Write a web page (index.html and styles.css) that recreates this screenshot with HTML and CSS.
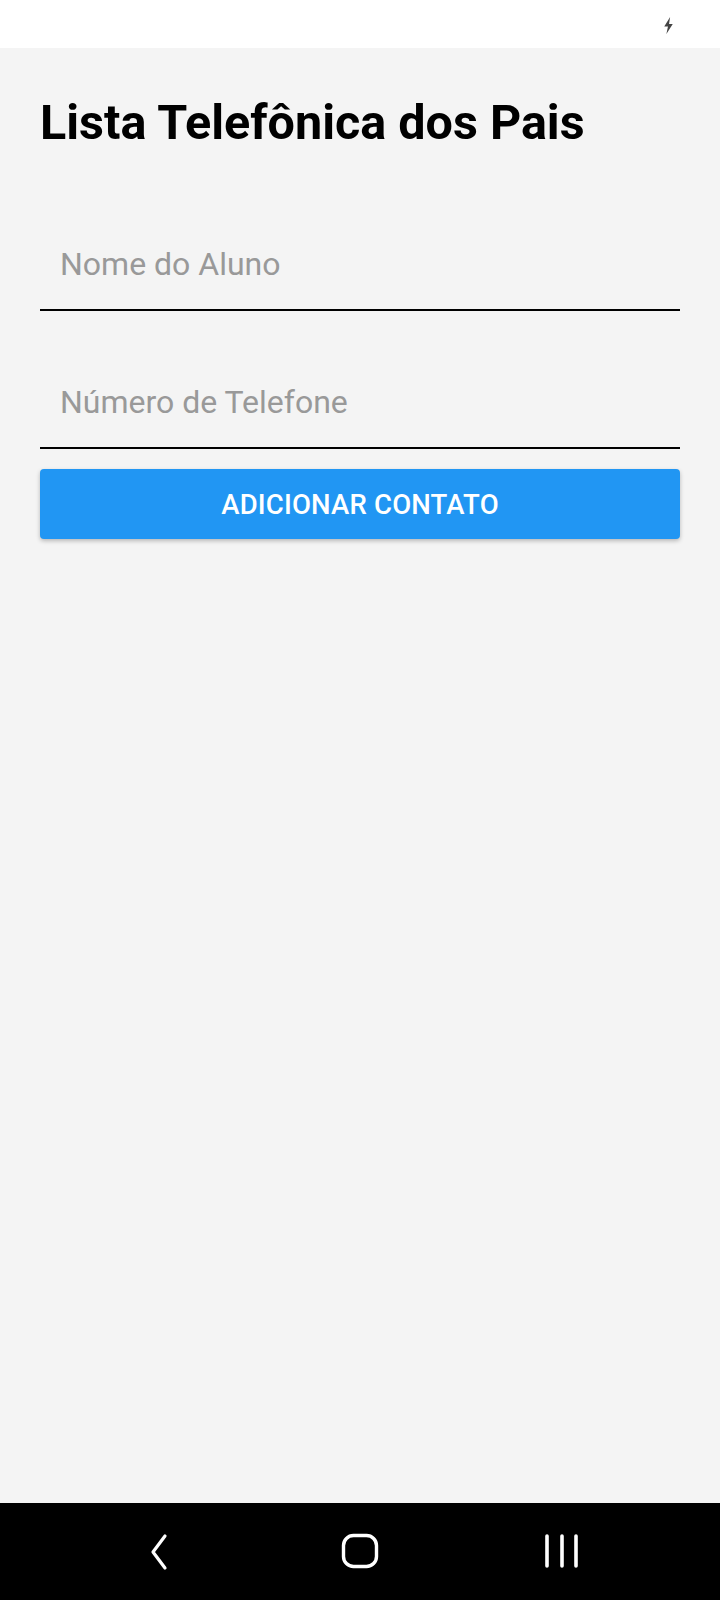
FILE: index.html
```html
<!DOCTYPE html>
<html lang="pt">
<head>
<meta charset="utf-8">
<title>Lista Telefônica dos Pais</title>
<link rel="stylesheet" href="styles.css">
</head>
<body>
<div class="screen">
  <header class="status-bar">
    <svg class="bolt" viewBox="0 0 10 16" width="11" height="17"><path d="M6.5 0 L1 9 H4.5 L3 16 L9 6.5 H5.5 Z" fill="#444"/></svg>
  </header>
  <main class="app">
    <h1 class="title">Lista Telefônica dos Pais</h1>
    <form class="form">
      <input class="field" type="text" placeholder="Nome do Aluno">
      <input class="field" type="tel" placeholder="Número de Telefone">
      <button class="add-btn" type="button">ADICIONAR CONTATO</button>
    </form>
  </main>
  <nav class="nav-bar">
    <svg class="nav-icon" viewBox="0 0 40 40" width="40" height="40"><path d="M27 4 L15 20 L27 36" fill="none" stroke="#fff" stroke-width="3.2" stroke-linecap="round" stroke-linejoin="round"/></svg>
    <svg class="nav-icon" viewBox="0 0 40 40" width="40" height="40"><rect x="3.5" y="3.5" width="33" height="31" rx="10" fill="none" stroke="#fff" stroke-width="3.4"/></svg>
    <svg class="nav-icon" viewBox="0 0 40 40" width="40" height="40"><path d="M5 4 V34 M20 4 V34 M34 4 V34" fill="none" stroke="#fff" stroke-width="3.6" stroke-linecap="round"/></svg>
  </nav>
</div>
</body>
</html>
```
FILE: styles.css
```css
* { box-sizing: border-box; }
html, body { margin: 0; padding: 0; }
body {
  font-family: Roboto, "Noto Sans", "Liberation Sans", sans-serif;
  background: #f4f4f4;
}
.screen {
  width: 720px;
  height: 1600px;
  display: flex;
  flex-direction: column;
}
.status-bar {
  height: 48px;
  background: #ffffff;
  display: flex;
  align-items: center;
  justify-content: flex-end;
  padding-right: 46px;
  flex-shrink: 0;
}
.bolt { display: block; margin-top: 2px; }
.app {
  flex: 1;
  background: #f4f4f4;
  padding: 0 40px;
}
.title {
  margin: 43px 0 0 0;
  font-size: 48.5px;
  font-weight: 700;
  color: #000;
  line-height: 64px;
  letter-spacing: 0;
}
.form {
  display: flex;
  flex-direction: column;
  margin-top: 64px;
}
.field {
  height: 92px;
  border: none;
  border-bottom: 2px solid #000;
  background: transparent;
  font-family: inherit;
  font-size: 32px;
  color: #000;
  padding: 0 20px;
  outline: none;
  margin-top: 46px;
}
.field:first-child { margin-top: 0; }
.field::placeholder { color: #999999; }
.add-btn {
  margin-top: 20px;
  height: 70px;
  border: none;
  border-radius: 4px;
  background: #2196f3;
  color: #fff;
  font-family: inherit;
  font-size: 27.5px;
  font-weight: 500;
  letter-spacing: 0.2px;
  box-shadow: 0 2px 4px rgba(0,0,0,0.25);
}
.nav-bar {
  height: 97px;
  background: #000;
  display: flex;
  justify-content: center;
  align-items: center;
  gap: 162px;
  flex-shrink: 0;
}
.nav-icon { display: block; }
```
